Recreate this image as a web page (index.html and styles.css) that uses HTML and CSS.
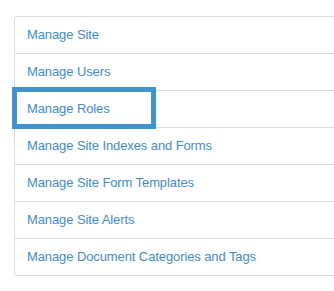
FILE: index.html
```html
<!DOCTYPE html>
<html>
<head>
<meta charset="utf-8">
<link rel="stylesheet" href="styles.css">
</head>
<body>
<div class="list-group">
  <a class="item" href="#">Manage Site</a>
  <a class="item" href="#">Manage Users</a>
  <a class="item item-highlight" href="#">Manage Roles<span class="highlight"></span></a>
  <a class="item" href="#">Manage Site Indexes and Forms</a>
  <a class="item" href="#">Manage Site Form Templates</a>
  <a class="item" href="#">Manage Site Alerts</a>
  <a class="item" href="#">Manage Document Categories and Tags</a>
</div>
</body>
</html>
```

FILE: styles.css
```css
html, body {
  margin: 0;
  padding: 0;
  background: #ffffff;
  overflow: hidden;
}
body {
  padding: 16px 0 0 14px;
  font-family: "Liberation Sans", Arial, sans-serif;
  font-size: 13px;
  letter-spacing: -0.1px;
}
.list-group {
  display: flex;
  flex-direction: column;
  border: 1px solid #dddddd;
  border-right: none;
  border-radius: 4px 0 0 4px;
}
.item {
  display: block;
  height: 36px;
  line-height: 36px;
  padding: 0 12px;
  color: #428bca;
  text-decoration: none;
  border-top: 1px solid #dddddd;
}
.item:first-child {
  border-top: none;
}
.item-highlight {
  position: relative;
}
.highlight {
  position: absolute;
  left: -3px;
  top: -4px;
  width: 134px;
  height: 32px;
  border: 5px solid #4195cc;
  pointer-events: none;
}
```
